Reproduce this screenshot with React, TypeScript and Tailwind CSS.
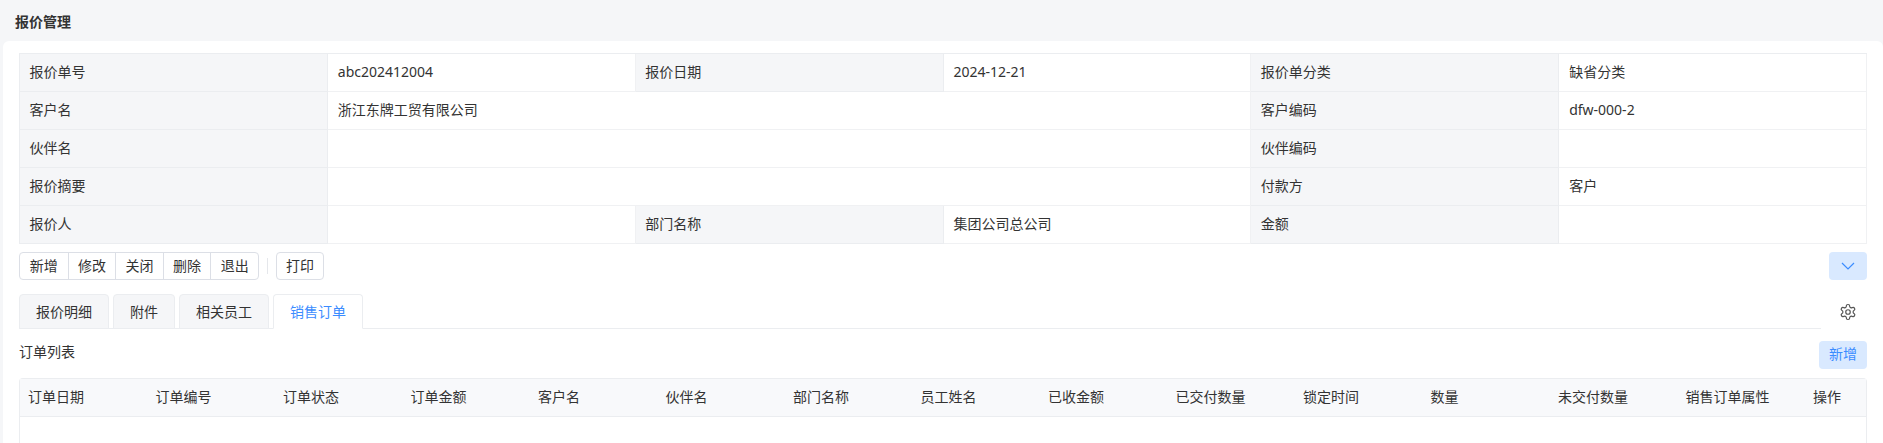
const FONT = "font-['Noto_Sans','Noto_Sans_CJK_SC',sans-serif]";

const rows: [string, string, string, string, string, string][] = [
  ["报价单号", "abc202412004", "报价日期", "2024-12-21", "报价单分类", "缺省分类"],
  ["客户名", "浙江东牌工贸有限公司", "", "", "客户编码", "dfw-000-2"],
  ["伙伴名", "", "", "", "伙伴编码", ""],
  ["报价摘要", "", "", "", "付款方", "客户"],
  ["报价人", "", "部门名称", "集团公司总公司", "金额", ""],
];

const actions = ["新增", "修改", "关闭", "删除", "退出"];
const tabs = ["报价明细", "附件", "相关员工"];
const columns = [
  "订单日期", "订单编号", "订单状态", "订单金额", "客户名", "伙伴名", "部门名称",
  "员工姓名", "已收金额", "已交付数量", "锁定时间", "数量", "未交付数量", "销售订单属性",
];

function Label({ text }: { text: string }) {
  return (
    <div className="flex items-center bg-[#f5f6f8] pl-[9.5px] pb-px border-r border-b border-[#ebedf0] text-[#333]">
      {text}
    </div>
  );
}

function Value({ text, wide }: { text: string; wide?: boolean }) {
  return (
    <div className={`flex items-center pl-[10px] pb-px border-r border-b border-[#f0f1f3] text-[#333] ${wide ? "col-span-3" : ""}`}>
      {text}
    </div>
  );
}

export default function App() {
  return (
    <div className={`${FONT} h-[443px] overflow-hidden bg-[#f5f6f8] text-sm`}>
      <div className="h-[41px] flex items-center pl-[15px] pt-[3px] font-bold text-[#333]">报价管理</div>
      <div className="h-[402px] ml-[3px] rounded-t-md bg-white px-4 pt-3">
        <div className="grid grid-cols-6 auto-rows-[38px] border-t border-l border-[#ebedf0]">
          {rows.map((r) => {
            const merged = r[2] === "" && r[3] === "";
            return (
              <div className="contents" key={r[0]}>
                <Label text={r[0]} />
                <Value text={r[1]} wide={merged} />
                {!merged && <Label text={r[2]} />}
                {!merged && <Value text={r[3]} />}
                <Label text={r[4]} />
                <Value text={r[5]} />
              </div>
            );
          })}
        </div>

        <div className="mt-2 flex items-center">
          <div className="flex h-7 rounded border border-[#dcdfe6] text-[#333]">
            {actions.map((a, i) => (
              <button key={a} className={`w-[47.6px] ${i > 0 ? "border-l border-[#dcdfe6]" : ""}`}>{a}</button>
            ))}
          </div>
          <div className="ml-[8px] mr-[8px] h-4 w-px bg-[#e5e7eb]" />
          <button className="h-7 w-12 rounded border border-[#dcdfe6] text-[#333]">打印</button>
          <button className="ml-auto flex h-7 w-[38px] items-center justify-center rounded bg-[#d9e9ff] text-[#3b8cff]">
            <svg width="14" height="14" viewBox="0 0 14 14" fill="none" stroke="currentColor" strokeWidth="1.2">
              <path d="M1 4 7 10 13 4" />
            </svg>
          </button>
        </div>

        <div className="mt-[14px] flex items-end">
          <div className="flex flex-1 gap-1 border-b border-[#ebedf0] h-[35px]">
            {tabs.map((t) => (
              <div key={t} className="flex h-[35px] items-center rounded-t border border-[#ebedf0] bg-[#f5f6f8] px-4 text-[#333]">
                {t}
              </div>
            ))}
            <div className="flex h-[35px] items-center rounded-t border border-b-white border-[#ebedf0] bg-white px-4 text-[#3b8cff]">
              销售订单
            </div>
          </div>
          <div className="flex w-[46px] h-[35px] items-center justify-center pl-[8px] text-[#555]">
            <svg width="18" height="18" viewBox="0 0 24 24" fill="none" stroke="currentColor" strokeWidth="1.6">
              <path d="M12.22 2h-.44a2 2 0 0 0-2 2v.18a2 2 0 0 1-1 1.73l-.43.25a2 2 0 0 1-2 0l-.15-.08a2 2 0 0 0-2.73.73l-.22.38a2 2 0 0 0 .73 2.73l.15.1a2 2 0 0 1 1 1.72v.51a2 2 0 0 1-1 1.74l-.15.09a2 2 0 0 0-.73 2.73l.22.38a2 2 0 0 0 2.73.73l.15-.08a2 2 0 0 1 2 0l.43.25a2 2 0 0 1 1 1.73V20a2 2 0 0 0 2 2h.44a2 2 0 0 0 2-2v-.18a2 2 0 0 1 1-1.73l.43-.25a2 2 0 0 1 2 0l.15.08a2 2 0 0 0 2.73-.73l.22-.39a2 2 0 0 0-.73-2.73l-.15-.08a2 2 0 0 1-1-1.74v-.5a2 2 0 0 1 1-1.74l.15-.09a2 2 0 0 0 .73-2.73l-.22-.38a2 2 0 0 0-2.73-.73l-.15.08a2 2 0 0 1-2 0l-.43-.25a2 2 0 0 1-1-1.73V4a2 2 0 0 0-2-2z" />
              <circle cx="12" cy="12" r="3" />
            </svg>
          </div>
        </div>

        <div className="mt-3 flex h-7 items-start justify-between">
          <span className="leading-[21px] text-[#333]">订单列表</span>
          <button className="h-7 w-12 rounded bg-[#d9e9ff] pb-0.5 text-[#3b8cff]">新增</button>
        </div>

        <div className="mt-[9px] h-[80px] rounded-t border-x border-t border-[#ebedf0]">
          <div className="grid h-[38px] grid-cols-[repeat(14,127.5px)_1fr] items-center border-b border-[#ebedf0] bg-[#f8f9fb] pb-[2px] text-[#333]">
            {columns.map((c) => (
              <div key={c} className="px-2 whitespace-nowrap">{c}</div>
            ))}
            <div className="px-2 whitespace-nowrap">操作</div>
          </div>
        </div>
      </div>
    </div>
  );
}
